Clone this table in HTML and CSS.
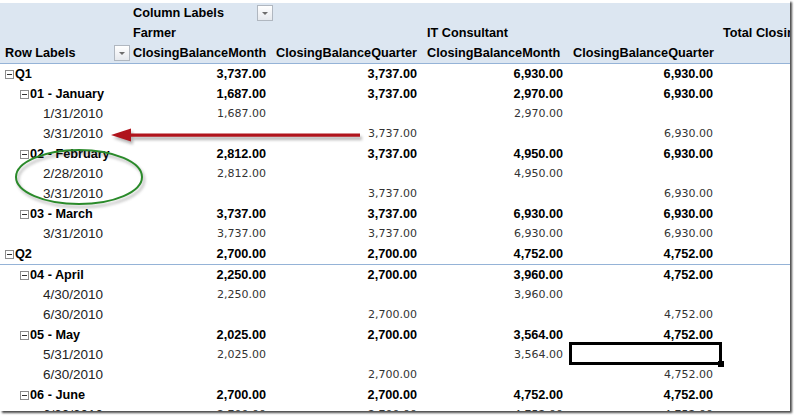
FILE: index.html
```html
<!DOCTYPE html>
<html>
<head>
<meta charset="utf-8">
<link rel="stylesheet" href="styles.css">
</head>
<body>
<div class="sheet">
<table class="pivot">
<colgroup><col class="c0"><col class="c1"><col class="c2"><col class="c3"><col class="c4"><col class="c5"></colgroup>
<thead>
<tr><th></th><th class="hcell"><div class="hflex"><span>Column Labels</span><span class="dd"></span></div></th><th></th><th></th><th></th><th></th></tr>
<tr><th></th><th>Farmer</th><th></th><th>IT Consultant</th><th></th><th class="tot">Total ClosingBalanceMonth</th></tr>
<tr class="hlast"><th class="rowlab"><div class="hflex"><span>Row Labels</span><span class="dd"></span></div></th><th>ClosingBalanceMonth</th><th>ClosingBalanceQuarter</th><th>ClosingBalanceMonth</th><th>ClosingBalanceQuarter</th><th></th></tr>
</thead>
<tbody>
<tr class="sub"><td class="lbl l0"><span class="tg"></span>Q1</td><td class="num">3,737.00</td><td class="num">3,737.00</td><td class="num">6,930.00</td><td class="num">6,930.00</td><td></td></tr>
<tr class="sub"><td class="lbl l1"><span class="tg"></span>01 - January</td><td class="num">1,687.00</td><td class="num">3,737.00</td><td class="num">2,970.00</td><td class="num">6,930.00</td><td></td></tr>
<tr class="det"><td class="lbl l2">1/31/2010</td><td class="num">1,687.00</td><td class="num"></td><td class="num">2,970.00</td><td class="num"></td><td></td></tr>
<tr class="det"><td class="lbl l2">3/31/2010</td><td class="num"></td><td class="num">3,737.00</td><td class="num"></td><td class="num">6,930.00</td><td></td></tr>
<tr class="sub"><td class="lbl l1"><span class="tg"></span>02 - February</td><td class="num">2,812.00</td><td class="num">3,737.00</td><td class="num">4,950.00</td><td class="num">6,930.00</td><td></td></tr>
<tr class="det"><td class="lbl l2">2/28/2010</td><td class="num">2,812.00</td><td class="num"></td><td class="num">4,950.00</td><td class="num"></td><td></td></tr>
<tr class="det"><td class="lbl l2">3/31/2010</td><td class="num"></td><td class="num">3,737.00</td><td class="num"></td><td class="num">6,930.00</td><td></td></tr>
<tr class="sub"><td class="lbl l1"><span class="tg"></span>03 - March</td><td class="num">3,737.00</td><td class="num">3,737.00</td><td class="num">6,930.00</td><td class="num">6,930.00</td><td></td></tr>
<tr class="det"><td class="lbl l2">3/31/2010</td><td class="num">3,737.00</td><td class="num">3,737.00</td><td class="num">6,930.00</td><td class="num">6,930.00</td><td></td></tr>
<tr class="sub qrow"><td class="lbl l0"><span class="tg"></span>Q2</td><td class="num">2,700.00</td><td class="num">2,700.00</td><td class="num">4,752.00</td><td class="num">4,752.00</td><td></td></tr>
<tr class="sub"><td class="lbl l1"><span class="tg"></span>04 - April</td><td class="num">2,250.00</td><td class="num">2,700.00</td><td class="num">3,960.00</td><td class="num">4,752.00</td><td></td></tr>
<tr class="det"><td class="lbl l2">4/30/2010</td><td class="num">2,250.00</td><td class="num"></td><td class="num">3,960.00</td><td class="num"></td><td></td></tr>
<tr class="det"><td class="lbl l2">6/30/2010</td><td class="num"></td><td class="num">2,700.00</td><td class="num"></td><td class="num">4,752.00</td><td></td></tr>
<tr class="sub"><td class="lbl l1"><span class="tg"></span>05 - May</td><td class="num">2,025.00</td><td class="num">2,700.00</td><td class="num">3,564.00</td><td class="num">4,752.00</td><td></td></tr>
<tr class="det"><td class="lbl l2">5/31/2010</td><td class="num">2,025.00</td><td class="num"></td><td class="num">3,564.00</td><td class="num sel"></td><td></td></tr>
<tr class="det"><td class="lbl l2">6/30/2010</td><td class="num"></td><td class="num">2,700.00</td><td class="num"></td><td class="num">4,752.00</td><td></td></tr>
<tr class="sub"><td class="lbl l1"><span class="tg"></span>06 - June</td><td class="num">2,700.00</td><td class="num">2,700.00</td><td class="num">4,752.00</td><td class="num">4,752.00</td><td></td></tr>
<tr class="det"><td class="lbl l2">6/30/2010</td><td class="num">2,700.00</td><td class="num">2,700.00</td><td class="num">4,752.00</td><td class="num">4,752.00</td><td></td></tr>
</tbody>
</table>
<svg class="marks" width="790" height="411" viewBox="0 0 790 411">
<defs><filter id="blur" x="-20%" y="-50%" width="140%" height="200%"><feGaussianBlur stdDeviation="1.6"/></filter></defs>
<g filter="url(#blur)" opacity="0.4" transform="translate(2,3)">
<path d="M111 135 L131 128.5 L131 133.5 L360 133.5 L360 137 L131 137 L131 141.5 Z" fill="#444"/>
<ellipse cx="79" cy="177" rx="63" ry="27" fill="none" stroke="#444" stroke-width="2"/>
</g>
<path d="M111 135 L131 128.5 L131 133.5 L360 133.5 L360 136.7 L131 136.7 L131 141.5 Z" fill="#b0141c"/>
<ellipse cx="79" cy="177" rx="63" ry="27" fill="none" stroke="#2a8a2a" stroke-width="2"/>
</svg>
</div>
</body>
</html>
```
FILE: styles.css
```css
html, body {
  margin: 0;
  padding: 0;
  background: #fff;
}
body {
  width: 794px;
  height: 416px;
  overflow: hidden;
}
.sheet {
  position: relative;
  width: 790px;
  height: 411px;
  box-sizing: border-box;
  padding-top: 3px;
  overflow: hidden;
  background: #fff;
  box-shadow: 2px 2px 2px rgba(0, 0, 0, 0.7);
}
.pivot {
  border-collapse: collapse;
  table-layout: fixed;
  width: 790px;
  font-family: "Liberation Sans", Arial, sans-serif;
  font-size: 12.7px;
  color: #000;
}
.c0 { width: 130px; }
.c1 { width: 143px; }
.c2 { width: 151px; }
.c3 { width: 146px; }
.c4 { width: 150px; }
.c5 { width: 70px; }
.pivot th, .pivot td {
  height: 20px;
  padding: 0;
  white-space: nowrap;
  overflow: visible;
  line-height: 20px;
  vertical-align: middle;
}
.pivot thead th {
  background: #dce6f1;
  font-weight: bold;
  text-align: left;
  padding-left: 3px;
}
.pivot thead .rowlab {
  padding-left: 5px;
}
.hlast th {
  border-bottom: 1px solid #95b3d7;
}
.hflex {
  display: flex;
  align-items: center;
  justify-content: space-between;
}
.dd {
  width: 16px;
  height: 16px;
  box-sizing: border-box;
  border: 1px solid #b0b7c0;
  background: linear-gradient(#ffffff, #e6e9ee);
  margin-right: 0;
  position: relative;
}
.dd::after {
  content: "";
  position: absolute;
  left: 4px;
  top: 6px;
  border-left: 3px solid transparent;
  border-right: 3px solid transparent;
  border-top: 3px solid #6d6d6d;
}
.tot {
  overflow: hidden;
}
.num {
  text-align: right;
  padding-right: 7px !important;
}
.sub td {
  font-weight: bold;
}
.det td.num {
  font-family: "DejaVu Sans", Verdana, sans-serif;
  font-size: 11px;
  color: #333;
}
.det td.lbl {
  font-size: 13.5px;
  color: #222;
}
.lbl {
  text-align: left;
}
.l0 { padding-left: 5px !important; }
.l1 { padding-left: 20px !important; }
.l2 { padding-left: 43px !important; }
.tg {
  display: inline-block;
  width: 9px;
  height: 9px;
  box-sizing: border-box;
  border: 1px solid #8c8c8c;
  background: #fff;
  position: relative;
  vertical-align: -1px;
  margin-right: 1px;
}
.tg::after {
  content: "";
  position: absolute;
  left: 1px;
  top: 3px;
  width: 5px;
  height: 1px;
  background: #333;
}
.qrow td {
  border-bottom: 1px solid #95b3d7;
}
.sel {
  position: relative;
}
.sel::after {
  content: "";
  position: absolute;
  left: -1px;
  top: -3px;
  right: -2px;
  bottom: 0;
  border: 3px solid #000;
}
.sel::before {
  content: "";
  position: absolute;
  right: -4px;
  bottom: -2px;
  width: 6px;
  height: 6px;
  background: #000;
  z-index: 1;
}
.marks {
  position: absolute;
  left: 0;
  top: 0;
  pointer-events: none;
}
```
